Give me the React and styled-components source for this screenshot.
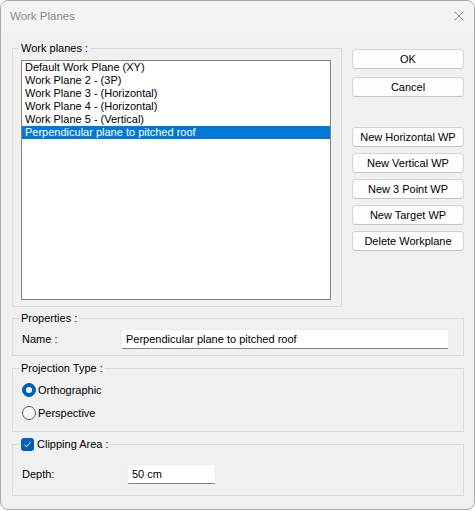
import styled, { createGlobalStyle } from "styled-components";

const GlobalStyle = createGlobalStyle`
  html, body {
    margin: 0;
    padding: 0;
    background: #ffffff;
  }
  * {
    box-sizing: border-box;
  }
`;

const Window = styled.div`
  width: 475px;
  height: 510px;
  border: 1px solid #a9a9a9;
  border-radius: 8px;
  background: #f0f0f0;
  overflow: hidden;
  font-family: "Liberation Sans", Arial, sans-serif;
  font-size: 11px;
  color: #000;
  display: flex;
  flex-direction: column;
`;

const TitleBar = styled.div`
  height: 31px;
  flex: none;
  display: flex;
  align-items: center;
  justify-content: space-between;
  padding: 0 10px 1px 9px;
  background: #f3f3f3;
`;

const Title = styled.span`
  font-size: 11.5px;
  color: #8a8a8a;
`;

const CloseButton = styled.button`
  border: none;
  background: transparent;
  padding: 0;
  width: 10px;
  height: 10px;
  display: flex;
`;

const Body = styled.div`
  padding: 9px 10px 0 11px;
  display: flex;
  flex-direction: column;
  gap: 4px;
`;

const TopRow = styled.div`
  display: flex;
  gap: 10px;
`;

const Group = styled.fieldset`
  margin: ${(p) => p.$mt || 0}px 0 0 0;
  min-width: 0;
  width: ${(p) => p.$width || "auto"};
  border: 1px solid #dadada;
  padding: ${(p) => p.$pad || "4px 14px 6px 8px"};
`;

const Legend = styled.legend`
  padding: 0 2px;
  margin-left: -2px;
  line-height: 14px;
  height: 14px;
  display: flex;
  align-items: center;
  gap: 3px;
`;

const ListBox = styled.ul`
  list-style: none;
  margin: 0;
  padding: 0;
  width: 310px;
  height: 240px;
  background: #fff;
  border: 1px solid #848484;
`;

const ListItem = styled.li`
  height: 13px;
  line-height: 13px;
  padding-left: 3px;
  white-space: nowrap;
  background: ${(p) => (p.$selected ? "#0078d7" : "transparent")};
  color: ${(p) => (p.$selected ? "#fff" : "#000")};
`;

const ButtonColumn = styled.div`
  width: 112px;
  margin-top: 8px;
  display: flex;
  flex-direction: column;
`;

const ButtonStack = styled.div`
  display: flex;
  flex-direction: column;
  gap: ${(p) => p.$gap}px;
  margin-top: ${(p) => p.$top || 0}px;
`;

const Button = styled.button`
  height: 20px;
  width: 100%;
  padding: 0;
  font: inherit;
  color: #000;
  background: #fdfdfd;
  border: 1px solid #d3d3d3;
  border-bottom-color: #c4c4c4;
  border-radius: 4px;
`;

const FieldRow = styled.div`
  display: flex;
  align-items: center;
`;

const FieldLabel = styled.span`
  width: ${(p) => p.$width}px;
  padding-left: 1px;
`;

const TextInput = styled.div`
  width: ${(p) => p.$width}px;
  height: 20px;
  background: #fff;
  border: 1px solid #ececec;
  border-bottom: 1px solid #858585;
  border-radius: 2px;
  padding-left: 4px;
  line-height: 18px;
`;

const RadioList = styled.div`
  display: flex;
  flex-direction: column;
  gap: 7px;
`;

const RadioRow = styled.label`
  height: 16px;
  flex: none;
  display: flex;
  align-items: center;
  gap: 2px;
  margin-left: 1px;
`;

const RadioCircle = styled.span`
  width: 14px;
  height: 14px;
  border-radius: 50%;
  flex: none;
  display: flex;
  align-items: center;
  justify-content: center;
  background: ${(p) => (p.$checked ? "#005fb8" : "#f7f7f7")};
  border: 1px solid ${(p) => (p.$checked ? "#005fb8" : "#5c5c5c")};
  &::after {
    content: "";
    display: ${(p) => (p.$checked ? "block" : "none")};
    width: 6px;
    height: 6px;
    border-radius: 50%;
    background: #fff;
  }
`;

const CheckBox = styled.span`
  width: 13px;
  height: 13px;
  border-radius: 3px;
  background: #005fb8;
  display: flex;
  align-items: center;
  justify-content: center;
`;

const planes = [
  "Default Work Plane (XY)",
  "Work Plane 2 - (3P)",
  "Work Plane 3 - (Horizontal)",
  "Work Plane 4 - (Horizontal)",
  "Work Plane 5 - (Vertical)",
  "Perpendicular plane to pitched roof",
];

const App = () => {
  return (
    <>
      <GlobalStyle />
      <Window>
        <TitleBar>
          <Title>Work Planes</Title>
          <CloseButton>
            <svg width="10" height="10" viewBox="0 0 10 10">
              <path d="M0.5 0.5 L9.5 9.5 M9.5 0.5 L0.5 9.5" stroke="#8c8c8c" strokeWidth="1" />
            </svg>
          </CloseButton>
        </TitleBar>
        <Body>
          <TopRow>
            <Group $width="330px" $pad="5px 10px 6px 8px">
              <Legend>Work planes :</Legend>
              <ListBox>
                {planes.map((p, i) => (
                  <ListItem key={p} $selected={i === planes.length - 1}>
                    {p}
                  </ListItem>
                ))}
              </ListBox>
            </Group>
            <ButtonColumn>
              <ButtonStack $gap={8}>
                <Button>OK</Button>
                <Button>Cancel</Button>
              </ButtonStack>
              <ButtonStack $gap={6} $top={30}>
                <Button>New Horizontal WP</Button>
                <Button>New Vertical WP</Button>
                <Button>New 3 Point WP</Button>
                <Button>New Target WP</Button>
                <Button>Delete Workplane</Button>
              </ButtonStack>
            </ButtonColumn>
          </TopRow>

          <Group $pad="4px 14px 6px 8px">
            <Legend>Properties :</Legend>
            <FieldRow>
              <FieldLabel $width={100}>Name :</FieldLabel>
              <TextInput $width={328}>Perpendicular plane to pitched roof</TextInput>
            </FieldRow>
          </Group>

          <Group $mt={1} $pad="7px 14px 10px 8px">
            <Legend>Projection Type :</Legend>
            <RadioList>
              <RadioRow>
                <RadioCircle $checked />
                Orthographic
              </RadioRow>
              <RadioRow>
                <RadioCircle />
                Perspective
              </RadioRow>
            </RadioList>
          </Group>

          <Group $mt={1} $pad="13px 14px 11px 8px">
            <Legend>
              <CheckBox>
                <svg width="9" height="9" viewBox="0 0 9 9">
                  <path d="M1.5 4.8 L3.6 6.8 L7.6 2.2" fill="none" stroke="#fff" strokeWidth="1" />
                </svg>
              </CheckBox>
              Clipping Area :
            </Legend>
            <FieldRow>
              <FieldLabel $width={106}>Depth:</FieldLabel>
              <TextInput $width={89}>50 cm</TextInput>
            </FieldRow>
          </Group>
        </Body>
      </Window>
    </>
  );
};

export default App;
